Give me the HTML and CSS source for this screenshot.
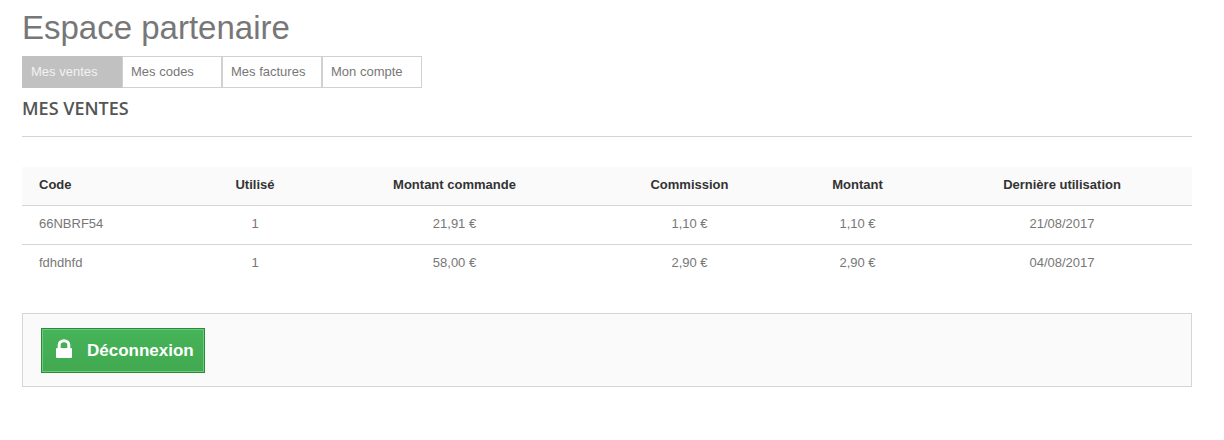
FILE: index.html
```html
<!DOCTYPE html>
<html lang="fr">
<head>
	<meta charset="UTF-8">
	<title>Espace partenaire</title>
	<link rel="stylesheet" href="styles.css">
</head>
<body>
	<div class="page">
		<h1 class="title">Espace partenaire</h1>

		<div class="tabs">
			<a href="#" class="tab on">Mes ventes</a>
			<a href="#" class="tab">Mes codes</a>
			<a href="#" class="tab">Mes factures</a>
			<a href="#" class="tab">Mon compte</a>
		</div>

		<h2 class="section">MES VENTES</h2>

		<table class="sales">
			<colgroup>
				<col class="c-code">
				<col class="c-used">
				<col class="c-order">
				<col class="c-comm">
				<col class="c-amount">
				<col class="c-date">
			</colgroup>
			<thead>
				<tr>
					<th class="left">Code</th>
					<th>Utilisé</th>
					<th>Montant commande</th>
					<th>Commission</th>
					<th>Montant</th>
					<th>Dernière utilisation</th>
				</tr>
			</thead>
			<tbody>
				<tr>
					<td class="left">66NBRF54</td>
					<td>1</td>
					<td>21,91 €</td>
					<td>1,10 €</td>
					<td>1,10 €</td>
					<td>21/08/2017</td>
				</tr>
				<tr>
					<td class="left">fdhdhfd</td>
					<td>1</td>
					<td>58,00 €</td>
					<td>2,90 €</td>
					<td>2,90 €</td>
					<td>04/08/2017</td>
				</tr>
			</tbody>
		</table>

		<div class="actions">
			<a href="#" class="logout">
				<svg class="lock" width="16" height="19" viewBox="0 0 16 19">
					<path d="M1 9h14a1 1 0 0 1 1 1v8a1 1 0 0 1-1 1H1a1 1 0 0 1-1-1v-8a1 1 0 0 1 1-1z" fill="#fff"/>
					<path d="M3.2 10V5.8a4.8 4 0 0 1 9.6 0V10" fill="none" stroke="#fff" stroke-width="3"/>
				</svg>
				<span>Déconnexion</span>
			</a>
		</div>
	</div>
</body>
</html>
```

FILE: styles.css
```css
* {
	padding: 0;
	margin: 0;
	box-sizing: border-box;
}

body {
	background: #fff;
	font-family: "Liberation Sans", Arial, sans-serif;
	font-size: 13px;
	color: #777;
}

.page {
	padding: 9px 32px 0 22px;
}

.title {
	font-size: 33px;
	font-weight: normal;
	line-height: 38px;
	color: #777;
}

.tabs {
	display: flex;
	margin-top: 9px;
}

.tab {
	width: 100px;
	height: 32px;
	line-height: 29px;
	padding-left: 8px;
	border: 1px solid #d0d0d0;
	color: #777;
	font-size: 13px;
	text-decoration: none;
}

.tab.on {
	background: #c1c1c1;
	border-color: #c1c1c1;
	color: #f2f2f2;
}

.section {
	margin-top: 8px;
	height: 41px;
	border-bottom: 1px solid #d5d5d5;
	font-family: "Open Sans", sans-serif;
	font-size: 18px;
	font-weight: 600;
	line-height: 24px;
	color: #555;
}

.sales {
	width: 1170px;
	margin-top: 30px;
	border-collapse: collapse;
	table-layout: fixed;
}

.c-code { width: 175px; }
.c-used { width: 116px; }
.c-order { width: 283px; }
.c-comm { width: 187px; }
.c-amount { width: 149px; }
.c-date { width: 260px; }

.sales th,
.sales td {
	text-align: center;
	font-size: 13px;
	padding-bottom: 2px;
}

.sales th {
	height: 38px;
	background: #fafafa;
	border-bottom: 1px solid #d5d5d5;
	color: #333;
	font-weight: bold;
}

.sales td {
	height: 39px;
	color: #777;
}

.sales tbody tr:first-child td {
	border-bottom: 1px solid #d5d5d5;
}

.sales .left {
	text-align: left;
	padding-left: 17px;
}

.actions {
	margin-top: 30px;
	height: 74px;
	padding: 14px 18px;
	background: #fafafa;
	border: 1px solid #d5d5d5;
}

.logout {
	display: inline-flex;
	align-items: center;
	width: 164px;
	height: 45px;
	padding-left: 14px;
	background: linear-gradient(#46b458, #41a950);
	border: 1px solid #2a8a3a;
	box-shadow: inset 0 0 0 1px #6ccb7c;
	color: #fff;
	font-size: 17px;
	font-weight: bold;
	text-decoration: none;
}

.lock {
	margin-right: 15px;
	margin-top: -4px;
}
```
